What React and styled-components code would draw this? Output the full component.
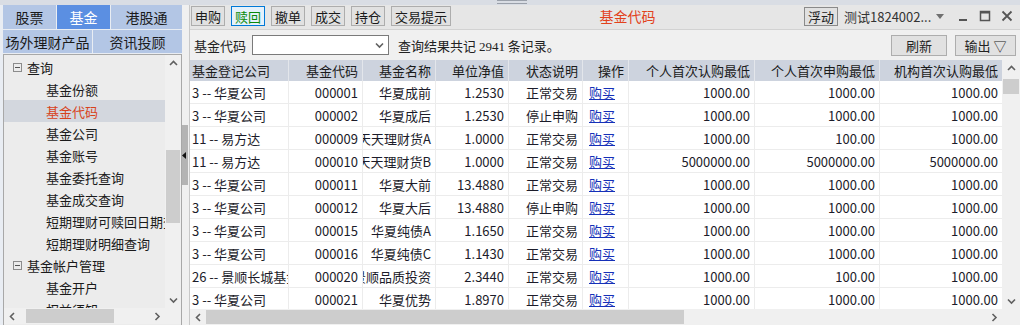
import React from "react";
import styled, { createGlobalStyle } from "styled-components";

const treeItems = [
    { label: "查询", root: true },
    { label: "基金份额" },
    { label: "基金代码", selected: true },
    { label: "基金公司" },
    { label: "基金账号" },
    { label: "基金委托查询" },
    { label: "基金成交查询" },
    { label: "短期理财可赎回日期查询" },
    { label: "短期理财明细查询" },
    { label: "基金帐户管理", root: true },
    { label: "基金开户" },
    { label: "权益须知" },
];

const columns = [
    { title: "基金登记公司", width: 99, align: "left" },
    { title: "基金代码", width: 74 },
    { title: "基金名称", width: 73 },
    { title: "单位净值", width: 73 },
    { title: "状态说明", width: 74 },
    { title: "操作", width: 46 },
    { title: "个人首次认购最低", width: 126 },
    { title: "个人首次申购最低", width: 125 },
    { title: "机构首次认购最低", width: 123 },
];

const rows = [
    ["3 -- 华夏公司", "000001", "华夏成前", "1.2530", "正常交易", "1000.00", "1000.00", "1000.00"],
    ["3 -- 华夏公司", "000002", "华夏成后", "1.2530", "停止申购", "1000.00", "1000.00", "1000.00"],
    ["11 -- 易方达", "000009", "天天理财货A", "1.0000", "正常交易", "1000.00", "100.00", "1000.00"],
    ["11 -- 易方达", "000010", "天天理财货B", "1.0000", "正常交易", "5000000.00", "5000000.00", "5000000.00"],
    ["3 -- 华夏公司", "000011", "华夏大前", "13.4880", "正常交易", "1000.00", "1000.00", "1000.00"],
    ["3 -- 华夏公司", "000012", "华夏大后", "13.4880", "停止申购", "1000.00", "1000.00", "1000.00"],
    ["3 -- 华夏公司", "000015", "华夏纯债A", "1.1650", "正常交易", "1000.00", "1000.00", "1000.00"],
    ["3 -- 华夏公司", "000016", "华夏纯债C", "1.1430", "正常交易", "1000.00", "1000.00", "1000.00"],
    ["26 -- 景顺长城基金", "000020", "景顺品质投资", "2.3440", "正常交易", "1000.00", "100.00", "1000.00"],
    ["3 -- 华夏公司", "000021", "华夏优势", "1.8970", "正常交易", "1000.00", "1000.00", "1000.00"],
];

const gridCols = columns.map((c) => c.width + "px").join(" ");

function Chevron({ dir }) {
    const pts = {
        up: "1,5 4.5,1.5 8,5",
        down: "1,1.5 4.5,5 8,1.5",
        left: "5,1 1.5,4.5 5,8",
        right: "1.5,1 5,4.5 1.5,8",
    }[dir];
    const horiz = dir === "left" || dir === "right";
    return (
        <svg width={horiz ? 7 : 9} height={horiz ? 9 : 7} viewBox={horiz ? "0 0 7 9" : "0 0 9 7"}>
            <polyline points={pts} fill="none" stroke="#606060" strokeWidth="1.6" />
        </svg>
    );
}

function VScroll({ top, size }) {
    return (
        <VBar>
            <Arrow><Chevron dir="up" /></Arrow>
            <VTrack><VThumb $top={top} $size={size} /></VTrack>
            <Arrow><Chevron dir="down" /></Arrow>
        </VBar>
    );
}

function HScroll({ left, size }) {
    return (
        <HBar>
            <Arrow><Chevron dir="left" /></Arrow>
            <HTrack><HThumb $left={left} $size={size} /></HTrack>
            <Arrow><Chevron dir="right" /></Arrow>
        </HBar>
    );
}

function WindowIcon({ kind }) {
    if (kind === "min")
        return (
            <svg width="12" height="12" viewBox="0 0 12 12">
                <rect x="2" y="9" width="8" height="2" fill="#555" />
            </svg>
        );
    if (kind === "max")
        return (
            <svg width="12" height="12" viewBox="0 0 12 12">
                <rect x="1.5" y="1.5" width="9" height="9" fill="none" stroke="#555" strokeWidth="1.5" />
                <rect x="1" y="1" width="10" height="2.5" fill="#555" />
            </svg>
        );
    return (
        <svg width="12" height="12" viewBox="0 0 12 12">
            <path d="M1.5 1.5 L10.5 10.5 M10.5 1.5 L1.5 10.5" stroke="#555" strokeWidth="1.8" />
        </svg>
    );
}

function Cell({ align, children }) {
    return (
        <CellBox $align={align}>
            <CellText>{children}</CellText>
        </CellBox>
    );
}

export default function App() {
    return (
        <>
            <GlobalStyle />
            <Window>
                <TopStrip>
                    <Grip />
                </TopStrip>
                <Body>
                    <Sidebar>
                        <TabRow $cols="53px 53px 1fr" $h={24}>
                            <Tab>股票</Tab>
                            <Tab $active>基金</Tab>
                            <Tab>港股通</Tab>
                        </TabRow>
                        <TabRow $cols="89px 1fr" $h={23}>
                            <Tab>场外理财产品</Tab>
                            <Tab>资讯投顾</Tab>
                        </TabRow>
                        <TreePanel>
                            <TreeView>
                                {treeItems.map((item) => (
                                    <TreeRow key={item.label} $root={item.root} $selected={item.selected}>
                                        {item.root && <Expander />}
                                        {item.label}
                                    </TreeRow>
                                ))}
                            </TreeView>
                            <VScroll top={79} size={73} />
                            <HScroll left={6} size={88} />
                            <Corner />
                        </TreePanel>
                    </Sidebar>

                    <Splitter>
                        <SplitHandle>
                            <svg width="4" height="7" viewBox="0 0 4 7">
                                <polygon points="4,0 0,3.5 4,7" fill="#111" />
                            </svg>
                        </SplitHandle>
                    </Splitter>

                    <Main>
                        <Toolbar>
                            <ButtonGroup>
                                <ToolButton>申购</ToolButton>
                                <ToolButton $active>赎回</ToolButton>
                                <ToolButton>撤单</ToolButton>
                                <ToolButton>成交</ToolButton>
                                <ToolButton>持仓</ToolButton>
                                <ToolButton>交易提示</ToolButton>
                            </ButtonGroup>
                            <Title>基金代码</Title>
                            <Controls>
                                <FloatButton>浮动</FloatButton>
                                <Account>测试1824002...</Account>
                                <DropTri />
                                <IconBox><WindowIcon kind="min" /></IconBox>
                                <IconBox><WindowIcon kind="max" /></IconBox>
                                <IconBox><WindowIcon kind="close" /></IconBox>
                            </Controls>
                        </Toolbar>

                        <FilterRow>
                            <Label>基金代码</Label>
                            <Combo>
                                <Chevron dir="down" />
                            </Combo>
                            <Result>
                                查询结果共记 <Count>2941</Count> 条记录。
                            </Result>
                            <Spacer />
                            <ActionButton $w={56}>刷新</ActionButton>
                            <ActionButton $w={61}>输出 ▽</ActionButton>
                        </FilterRow>

                        <TableArea>
                            <TableView>
                                <HeaderRow>
                                    {columns.map((c) => (
                                        <HeadCell key={c.title} $align={c.align}>{c.title}</HeadCell>
                                    ))}
                                </HeaderRow>
                                {rows.map((r) => (
                                    <DataRow key={r[1]}>
                                        <Cell align="left">{r[0]}</Cell>
                                        <Cell>{r[1]}</Cell>
                                        <Cell>{r[2]}</Cell>
                                        <Cell>{r[3]}</Cell>
                                        <Cell>{r[4]}</Cell>
                                        <LinkCell><BuyLink>购买</BuyLink></LinkCell>
                                        <Cell>{r[5]}</Cell>
                                        <Cell>{r[6]}</Cell>
                                        <Cell>{r[7]}</Cell>
                                    </DataRow>
                                ))}
                            </TableView>
                            <VScroll top={3} size={15} />
                            <HScroll left={0} size={478} />
                            <Corner />
                        </TableArea>
                    </Main>
                </Body>
            </Window>
        </>
    );
}

const GlobalStyle = createGlobalStyle`
    * {
        box-sizing: border-box;
    }
    body {
        margin: 0;
        background: #f0f0f0;
        font-family: "Noto Sans CJK SC", "Noto Sans", sans-serif;
        font-size: 13px;
        color: #222;
    }
`;

const Window = styled.div`
    width: 1020px;
    height: 325px;
    display: flex;
    flex-direction: column;
    overflow: hidden;
    background: #f0f0f0;
`;

const TopStrip = styled.div`
    height: 5px;
    background: #d9dde4;
    display: flex;
    justify-content: center;
    align-items: flex-start;
`;

const Grip = styled.div`
    width: 30px;
    height: 4px;
    margin-left: 4px;
    border-top: 1px solid #9aa0aa;
    border-bottom: 1px solid #9aa0aa;
`;

const Body = styled.div`
    flex: 1;
    display: flex;
    min-height: 0;
`;

const Sidebar = styled.div`
    width: 182px;
    padding-left: 3px;
    display: flex;
    flex-direction: column;
    background: #e9edf3;
`;

const TabRow = styled.div`
    display: grid;
    grid-template-columns: ${(p) => p.$cols};
    height: ${(p) => p.$h}px;
    gap: 1px;
    margin-bottom: 1px;
`;

const Tab = styled.div`
    display: flex;
    align-items: center;
    justify-content: center;
    font-size: 14px;
    background: ${(p) => (p.$active ? "#5b8fe2" : "#b3c6e5")};
    color: ${(p) => (p.$active ? "#fff" : "#1a1a1a")};
`;

const TreePanel = styled.div`
    flex: 1;
    display: grid;
    grid-template-columns: 1fr 16px;
    grid-template-rows: 1fr 16px;
    border: 1px solid #a8a8a8;
    border-bottom: none;
    background: #ececec;
    min-height: 0;
    padding-bottom: 1px;
`;

const TreeView = styled.div`
    overflow: hidden;
    padding-top: 1px;
`;

const TreeRow = styled.div`
    height: 22px;
    display: flex;
    align-items: center;
    white-space: nowrap;
    padding-left: ${(p) => (p.$root ? "9px" : "42px")};
    padding-bottom: ${(p) => (p.$root ? "0" : "0")};
    background: ${(p) => (p.$selected ? "#d3d7de" : "transparent")};
    color: ${(p) => (p.$selected ? "#d8431b" : "#1a1a1a")};
    font-size: 13px;
`;

const Expander = styled.span`
    width: 9px;
    height: 9px;
    margin-right: 5px;
    border: 1px solid #8c8c8c;
    position: relative;
    &::after {
        content: "";
        position: absolute;
        left: 1px;
        right: 1px;
        top: 3px;
        height: 1px;
        background: #555;
    }
`;

const VBar = styled.div`
    display: flex;
    flex-direction: column;
    background: #f0f0f0;
    min-height: 0;
`;

const HBar = styled.div`
    display: flex;
    background: #f0f0f0;
`;

const Arrow = styled.div`
    flex: 0 0 16px;
    height: 16px;
    display: flex;
    align-items: center;
    justify-content: center;
`;

const VTrack = styled.div`
    flex: 1;
    padding: 0 1px;
`;

const VThumb = styled.div`
    margin-top: ${(p) => p.$top}px;
    height: ${(p) => p.$size}px;
    background: #cdcdcd;
`;

const HTrack = styled.div`
    flex: 1;
    padding: 1px 0;
    display: flex;
`;

const HThumb = styled.div`
    margin-left: ${(p) => p.$left}px;
    width: ${(p) => p.$size}px;
    background: #cdcdcd;
`;

const Corner = styled.div`
    background: #f0f0f0;
`;

const Splitter = styled.div`
    width: 7px;
    background: #f0f0f0;
    display: flex;
    align-items: center;
    padding-bottom: 20px;
`;

const SplitHandle = styled.div`
    width: 6px;
    height: 60px;
    background: #b4b4b4;
    display: flex;
    align-items: center;
`;

const Main = styled.div`
    flex: 1;
    display: flex;
    flex-direction: column;
    min-width: 0;
    border-left: 1px solid #c8c8c8;
`;

const Toolbar = styled.div`
    height: 25px;
    display: flex;
    align-items: center;
    padding: 0 0 2px 1px;
    background: #e6e6e6;
    border-bottom: 1px solid #d2d2d2;
`;

const ButtonGroup = styled.div`
    display: flex;
    gap: 6px;
`;

const ToolButton = styled.div`
    height: 20px;
    min-width: 34px;
    padding: 0 3px;
    display: flex;
    align-items: center;
    justify-content: center;
    font-size: 13px;
    background: ${(p) => (p.$active ? "#e5f1fb" : "#e1e1e1")};
    border: 1px solid ${(p) => (p.$active ? "#0078d7" : "#adadad")};
    color: ${(p) => (p.$active ? "#0a8a0a" : "#1a1a1a")};
`;

const Title = styled.div`
    flex: 1;
    text-align: center;
    color: #e2421d;
    font-size: 14px;
`;

const Controls = styled.div`
    display: flex;
    align-items: center;
    padding-right: 2px;
`;

const FloatButton = styled.div`
    height: 19px;
    padding: 0 3px;
    display: flex;
    align-items: center;
    border: 1px solid #8a8a8a;
    background: #e1e1e1;
    font-size: 13px;
`;

const Account = styled.div`
    margin-left: 6px;
    width: 88px;
    font-size: 13px;
    color: #333;
    white-space: nowrap;
`;

const DropTri = styled.div`
    width: 0;
    height: 0;
    margin: 0 8px 0 4px;
    border-left: 4px solid transparent;
    border-right: 4px solid transparent;
    border-top: 5px solid #707070;
`;

const IconBox = styled.div`
    width: 22px;
    height: 20px;
    display: flex;
    align-items: center;
    justify-content: center;
`;

const FilterRow = styled.div`
    height: 30px;
    display: flex;
    align-items: center;
    padding: 0 4px 0 4px;
    background: #f0f0f0;
`;

const Label = styled.div`
    font-size: 13px;
    margin-right: 6px;
`;

const Combo = styled.div`
    width: 137px;
    height: 20px;
    background: #fff;
    border: 1px solid #7a7a7a;
    display: flex;
    align-items: center;
    justify-content: flex-end;
    padding-right: 4px;
`;

const Result = styled.div`
    margin-left: 9px;
    font-size: 13px;
    white-space: nowrap;
`;

const Count = styled.span`
    font-family: "Liberation Serif", serif;
    font-size: 13px;
`;

const Spacer = styled.div`
    flex: 1;
`;

const ActionButton = styled.div`
    width: ${(p) => p.$w}px;
    height: 21px;
    margin-left: 8px;
    display: flex;
    align-items: center;
    justify-content: center;
    border: 1px solid #adadad;
    background: #e1e1e1;
    font-size: 13px;
`;

const TableArea = styled.div`
    flex: 1;
    display: grid;
    grid-template-columns: 1fr 18px;
    grid-template-rows: 1fr 16px;
    min-height: 0;
    background: #fff;
`;

const TableView = styled.div`
    overflow: hidden;
    background: #fff;
`;

const HeaderRow = styled.div`
    display: grid;
    grid-template-columns: ${gridCols};
    height: 21px;
    background: #cdd3de;
`;

const HeadCell = styled.div`
    padding: 0 4px 0 2px;
    line-height: 21px;
    text-align: ${(p) => p.$align || "right"};
    white-space: nowrap;
    overflow: hidden;
    border-right: 1px solid #e3e6eb;
    font-size: 13px;
    color: #1a1a1a;
`;

const DataRow = styled.div`
    display: grid;
    grid-template-columns: ${gridCols};
    height: 23px;
    border-bottom: 1px solid #ececec;
`;

const CellBox = styled.div`
    display: flex;
    align-items: center;
    justify-content: ${(p) => (p.$align === "left" ? "flex-start" : "flex-end")};
    padding: 1px 4px 0 2px;
    overflow: hidden;
    border-right: 1px solid #ececec;
`;

const CellText = styled.span`
    flex-shrink: 0;
    white-space: nowrap;
    font-size: 13px;
    color: #1c1c2a;
`;

const LinkCell = styled.div`
    padding: 1px 0 0 6px;
    display: flex;
    align-items: center;
    border-right: 1px solid #ececec;
`;

const BuyLink = styled.span`
    color: #1530b8;
    text-decoration: underline;
    font-size: 13px;
`;
